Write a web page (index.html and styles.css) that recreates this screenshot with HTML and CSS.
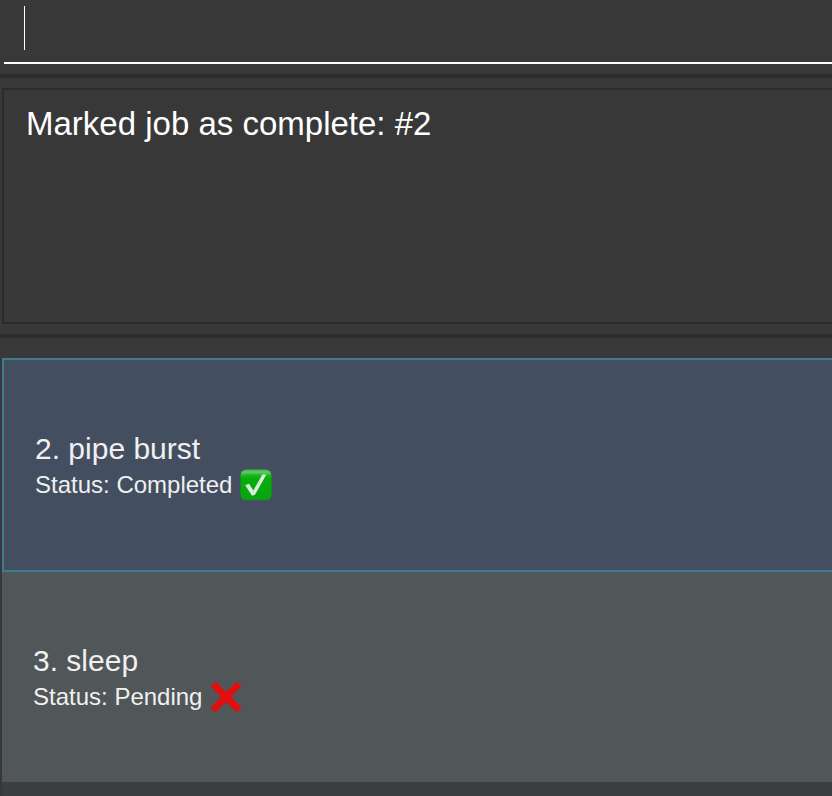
FILE: index.html
```html
<!DOCTYPE html>
<html lang="en">
<head>
<meta charset="utf-8">
<meta name="viewport" content="width=device-width, initial-scale=1">
<title>Jobs</title>
<link rel="stylesheet" href="styles.css">
</head>
<body>
<main class="app">
  <form class="command">
    <input class="command-input" type="text" aria-label="Command" autocomplete="off">
    <span class="caret"></span>
  </form>
  <section class="result">
    <output class="result-text">Marked job as complete: #2</output>
  </section>
  <ul class="jobs">
    <li class="job job-selected">
      <h2 class="job-title">2. pipe burst</h2>
      <p class="job-status">Status: Completed
        <svg class="icon" viewBox="0 0 32 32" aria-hidden="true">
          <defs>
            <linearGradient id="green" x1="0" y1="0" x2="0" y2="1">
              <stop offset="0" stop-color="#3fae45"/>
              <stop offset="0.08" stop-color="#62cc66"/>
              <stop offset="0.2" stop-color="#16b51d"/>
              <stop offset="0.3" stop-color="#04ae0a"/>
              <stop offset="0.9" stop-color="#08a50c"/>
              <stop offset="1" stop-color="#188c22"/>
            </linearGradient>
          </defs>
          <rect x="0.5" y="0.5" width="31" height="31" rx="6" fill="url(#green)"/>
          <path d="M5.2 16.2L9 14.8L13.4 21.4L22.4 5.6L26.4 5.4L15 25.8L12 26.8Z" fill="#dcebdc"/>
        </svg>
      </p>
    </li>
    <li class="job">
      <h2 class="job-title">3. sleep</h2>
      <p class="job-status">Status: Pending
        <svg class="icon" viewBox="0 0 32 32" aria-hidden="true">
          <path d="M5.4 1L16 11.4L26.8 1.2L31 5.2L20.6 15.8L31 26.6L26.8 31L16 20.6L5.2 31L1 26.8L11.4 16L1.2 5.4Z" fill="#e60d0d" stroke="#d31414" stroke-width="1" stroke-linejoin="round"/>
        </svg>
      </p>
    </li>
  </ul>
</main>
</body>
</html>
```
FILE: styles.css
```css
* {
  box-sizing: border-box;
}

body {
  margin: 0;
  background: #383838;
  color: #fff;
  font-family: "Liberation Sans", Arial, sans-serif;
}

.app {
  display: flex;
  flex-direction: column;
  min-height: 100vh;
  overflow: hidden;
}

.command {
  position: relative;
  padding: 0 0 10px 4px;
  border-bottom: 4px solid #2b2b2b;
}

.command-input {
  display: block;
  width: 100%;
  height: 64px;
  padding: 6px 20px 12px;
  border: 0;
  border-bottom: 2px solid #fff;
  outline: 0;
  background: transparent;
  color: inherit;
  font: inherit;
  font-size: 33px;
}

.caret {
  position: absolute;
  top: 6px;
  left: 24px;
  width: 1px;
  height: 44px;
  background: #fff;
}

.result {
  padding: 10px 0 10px 2px;
  border-bottom: 4px solid #2b2b2b;
}

.result-text {
  display: block;
  min-height: 236px;
  padding: 12px 22px;
  border: 2px solid #2b2b2b;
  border-right: 0;
  font-size: 33px;
  line-height: 44px;
}

.jobs {
  flex: 1;
  margin: 20px 0 0;
  padding: 0 0 14px;
  border-left: 2px solid #383838;
  background: #3d3e40;
  list-style: none;
}

.job {
  padding: 70px 31px 68px;
  background: #515658;
  color: #f0f0f0;
}

.job-selected {
  border: 2px solid #3e7b91;
  border-right: 0;
  background: #434e60;
}

.job-title {
  margin: 0;
  font-size: 30px;
  font-weight: 400;
  line-height: 38px;
}

.job-status {
  display: flex;
  align-items: center;
  gap: 8px;
  margin: 0;
  font-size: 24px;
  line-height: 34px;
}

.icon {
  flex: none;
  width: 32px;
  height: 32px;
}
```
